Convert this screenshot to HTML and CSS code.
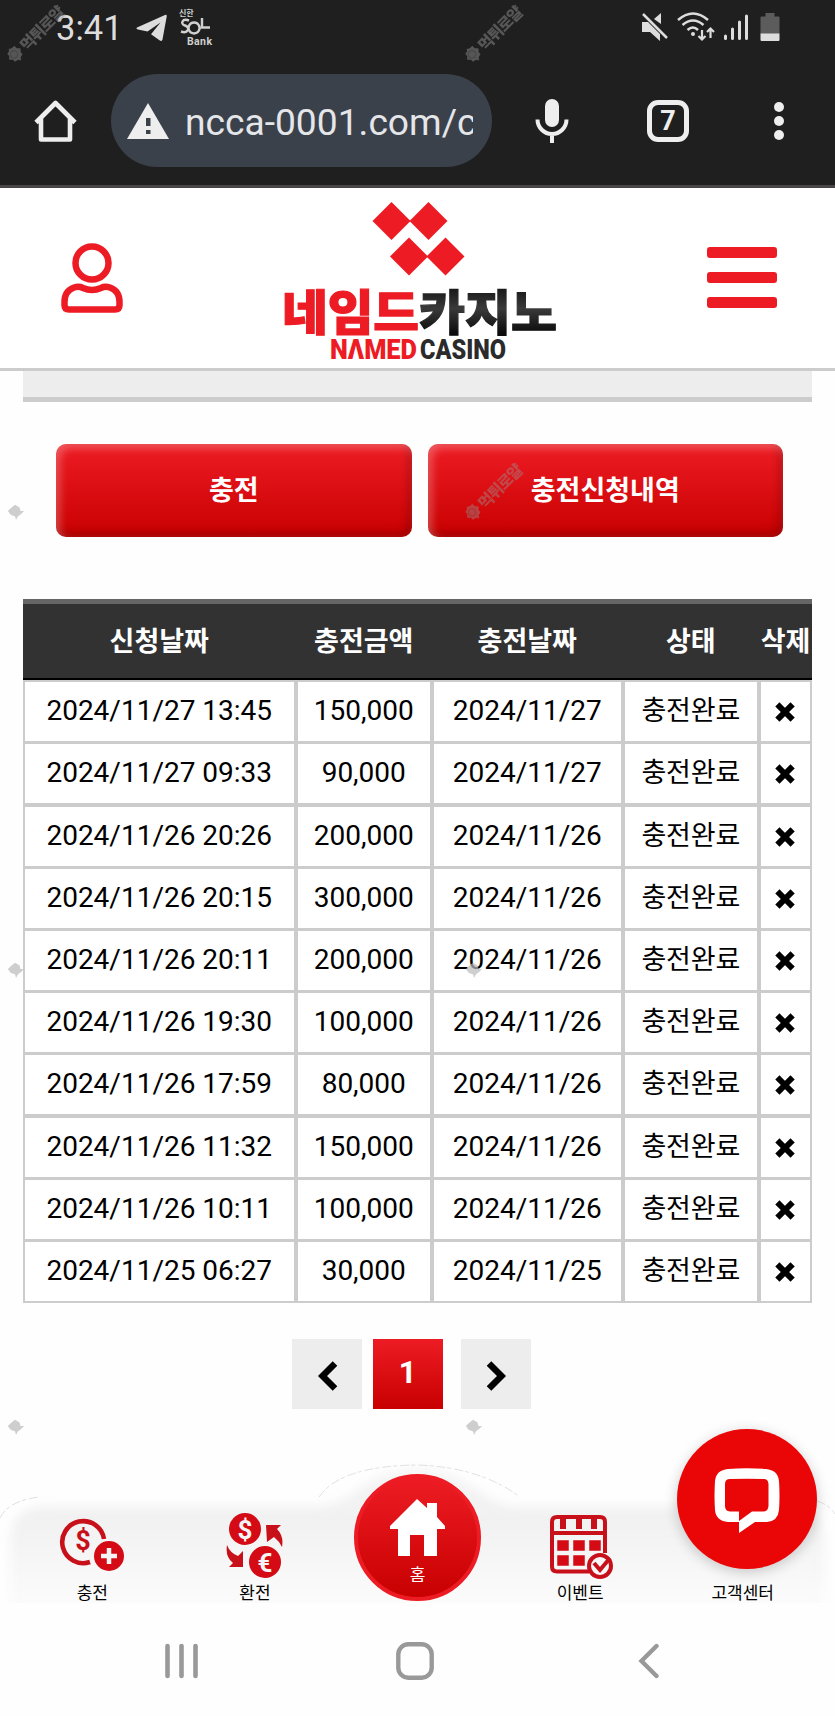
FILE: index.html
```html
<!DOCTYPE html>
<html lang="ko">

<head>
    <meta charset="UTF-8">
    <meta name="viewport" content="width=device-width, initial-scale=1.0">
    <title>네임드카지노</title>
    <link rel="stylesheet" href="styles.css">
</head>

<body>
    <svg class="defs" width="0" height="0">
        <defs>
            <symbol id="x" viewBox="0 0 20 20">
                <path d="M4.500 4.500L15.500 15.500M15.500 4.500L4.500 15.500" stroke="#000" stroke-width="6" stroke-linecap="square" />
            </symbol>
            <symbol id="badge" viewBox="0 0 20 20">
                <path d="M10 1l3 2 4 0 0 4 3 3-3 3 0 3-4 1-2 3-2-3-4-1 0-3-3-3 3-3 0-3 4-1z" fill="currentColor" />
                <circle cx="10" cy="9.500" r="4" fill="none" stroke="#000" stroke-opacity=".2" stroke-width="1.500" />
            </symbol>
            <symbol id="gem" viewBox="0 0 20 20">
                <path d="M9 2l5 3 1 4 4 0-3 3-4 3-2 4-1-4-5-2-3-4 4-4z" fill="currentColor" />
            </symbol>
            <linearGradient id="dark" x1="0" y1="0" x2="0" y2="1">
                <stop offset=".15" stop-color="#111" />
                <stop offset=".5" stop-color="#3a3a3a" />
                <stop offset=".85" stop-color="#0c0c0c" />
            </linearGradient>
            <linearGradient id="bar" x1="0" y1="0" x2="0" y2="1">
                <stop offset="0" stop-color="#f4f4f4" />
                <stop offset=".35" stop-color="#f1f1f1" />
                <stop offset="1" stop-color="#fcfcfc" />
            </linearGradient>
        </defs>
    </svg>

    <!-- status bar -->
    <div class="status">
        <span class="time">3:41</span>
        <svg class="telegram" width="32" height="28" viewBox="0 0 32 28">
            <path d="M1 13.500L29 1Q31 0 30.700 2.500L26.500 25.500Q26 28 23.500 26.300L15 20.300L24.500 8.500L11.500 17.500L2 15.500Q-.5 14.500 1 13.500z" fill="#ddd" />
        </svg>
        <svg class="sol" width="36" height="42" viewBox="0 0 36 42" fill="#d0d0d0">
            <text x="0" y="9" font-size="8" font-weight="700">신한</text>
            <path d="M10 13.500C3 11 1 17 6 18.500C12 20.500 9 27 2 24.500M15 15.500a5.500 5.500 0 1 0 .1 0zM23 11V20.500H31" fill="none" stroke="#d0d0d0" stroke-width="2.400" />
            <text x="8" y="38" font-size="10.500" font-weight="700" textLength="25">Bank</text>
        </svg>
        <div class="status-right">
            <svg width="27" height="30" viewBox="0 0 27 30">
                <path d="M20 1V12L13 7z" fill="#ddd" />
                <path d="M2 2L26 26" stroke="#1f1f1f" stroke-width="5" />
                <path d="M1 10H7L19 22V29L9 20H1z" fill="#ddd" />
                <path d="M2 2L26 26" stroke="#ddd" stroke-width="2.500" />
            </svg>
            <svg class="wifi" width="38" height="30" viewBox="0 0 38 30" fill="none" stroke="#ddd" stroke-width="2.500">
                <path d="M1 8Q16 -5 31 8M5.500 13Q16 4 26.500 13M10.500 18Q16 13 21 18" />
                <circle cx="16" cy="22" r="2" fill="#ddd" stroke="none" />
                <path d="M25 18V27M21.500 24L25 27.500L28.500 24M33.500 26V17M30 20L33.500 16.500L37 20" stroke-width="2.200" />
            </svg>
            <svg class="signal" width="26" height="30" viewBox="0 0 26 30" stroke="#ddd" stroke-width="3" stroke-linecap="round">
                <path d="M2.500 24V26.500M9.500 17V26.500M16.500 10V26.500M23.500 4V26.500" />
            </svg>
            <svg class="battery" width="20" height="30" viewBox="0 0 20 30">
                <path d="M5.500 1h9v3.500H18.500q1 0 1 1V22H.5V5.500q0-1 1-1h4z" fill="#5c5c5c" />
                <path d="M.5 21.500H19.500V28q0 1-1 1H1.500q-1 0-1-1z" fill="#ddd" />
            </svg>
        </div>
    </div>

    <!-- browser toolbar -->
    <div class="toolbar">
        <svg width="43" height="44" viewBox="0 0 43 44" fill="none" stroke="#eee" stroke-width="4.600" stroke-linejoin="round">
            <path d="M2 23.500L21.500 4L41 23.500M7 19V40.500H36V19" />
        </svg>
        <div class="url">
            <svg width="42" height="36" viewBox="0 0 42 36">
                <path d="M21 0L42 36H0z" fill="#eee" />
                <path d="M19 15h4.500v8H19zM19 27h4.500v4H19z" fill="#3b414b" />
            </svg>
            <span>ncca-0001.com/c</span>
        </div>
        <svg class="mic" width="34" height="46" viewBox="0 0 34 46">
            <rect x="10" y="1" width="14" height="28" rx="7" fill="#eee" />
            <path d="M2.500 21.500A14.500 14.500 0 0 0 31.500 21.500M17 35V45" fill="none" stroke="#eee" stroke-width="4" />
        </svg>
        <div class="tabs">7</div>
        <div class="dots"><i></i><i></i><i></i></div>
    </div>

    <!-- site header -->
    <div class="header">
        <svg width="62" height="71" viewBox="0 0 62 71" fill="none" stroke="#ed1c24" stroke-width="6.500">
            <circle cx="31" cy="20" r="16.500" />
            <path d="M3.500 62V59Q3.500 48 13 44.500Q18 43 22 45Q31 49 40 45Q44 43 49 44.500Q58.500 48 58.500 59V62Q58.500 66.500 54 66.500H8Q3.500 66.500 3.500 62z" />
        </svg>
        <svg class="logo" width="278" height="160" viewBox="0 0 278 160">
            <path d="M109.500 0l19 19-19 19-19-19zM146.500 0l19 19-19 19-19-19zM127 35.500l19 19-19 19-19-19zM163.500 35.500l19 19-19 19-19-19z" fill="#ed1c24" />
            <text class="logo-ko" x="0" y="127.500" textLength="137" lengthAdjust="spacingAndGlyphs" fill="#ed1c24" stroke="#ed1c24">네임드</text>
            <text class="logo-ko" x="137" y="127.500" textLength="138" lengthAdjust="spacingAndGlyphs" fill="url(#dark)" stroke="url(#dark)">카지노</text>
            <text class="logo-en" x="48" y="156.500" textLength="87" lengthAdjust="spacingAndGlyphs" fill="#ed1c24">NΛMED</text>
            <text class="logo-en" x="138" y="156.500" textLength="86" lengthAdjust="spacingAndGlyphs" fill="#2b2b2b">CASINO</text>
        </svg>
        <div class="menu"><i></i><i></i><i></i></div>
    </div>

    <div class="content">
        <div class="panel-end"></div>

        <div class="btns">
            <a class="btn">충전</a>
            <a class="btn">충전신청내역</a>
        </div>

        <div class="table">
            <div class="row head"><b>신청날짜</b><b>충전금액</b><b>충전날짜</b><b>상태</b><b>삭제</b></div>
            <div class="list"></div>
        </div>

        <div class="pages">
            <a class="page prev"><svg width="20" height="30" viewBox="0 0 20 30"><path d="M17 2.500L4.500 15L17 27.500" fill="none" stroke="#000" stroke-width="6.500" /></svg></a>
            <a class="page on">1</a>
            <a class="page next"><svg width="20" height="30" viewBox="0 0 20 30"><path d="M3 2.500L15.500 15L3 27.500" fill="none" stroke="#000" stroke-width="6.500" /></svg></a>
        </div>
    </div>

    <!-- bottom menu -->
    <div class="dock">
        <svg class="dock-bg" width="835" height="142" viewBox="0 0 835 142">
            <path class="dock-shape" d="M10 150V78Q12 46 46 45H322Q342 42 362 26Q417 -10 473 26Q493 42 514 45H790Q822 46 825 78V150z" fill="url(#bar)" />
            <path d="M0 57Q8 40 39 36M319 36Q340 5 417 4Q480 6 520 36M817 40Q828 43 835 53" fill="none" stroke="#ccc" stroke-width=".6" stroke-dasharray="9 2 4 3" />
        </svg>
        <div class="dock-items">
            <a class="item">
                <svg width="66" height="66" viewBox="0 0 66 66">
                    <path d="M44 27A21 21 0 1 0 30 50" transform="translate(1 -1)" fill="none" stroke="#c8101a" stroke-width="4.600" />
                    <text x="24" y="37" font-size="27" font-weight="700" text-anchor="middle" fill="#c8101a">$</text>
                    <circle cx="50" cy="43" r="15" fill="#d40b14" />
                    <path d="M50 35V51M42 43H58" stroke="#f4f4f4" stroke-width="4.500" />
                </svg>
                <span>충전</span>
            </a>
            <a class="item">
                <svg width="66" height="66" viewBox="0 0 66 66">
                    <circle cx="23" cy="16" r="16" fill="#d40b14" />
                    <circle cx="43" cy="49" r="16" fill="#d40b14" />
                    <text x="23" y="25.500" font-size="26" font-weight="700" text-anchor="middle" fill="#f4f4f4">$</text>
                    <text x="43" y="58.500" font-size="26" font-weight="700" text-anchor="middle" fill="#f4f4f4">€</text>
                    <path d="M44 12H59L55 16Q62 23 60 34Q57 28 52 24L45 29zM5 32Q8 40 16 43L21 38V54H7L11 50Q3 44 5 32z" fill="#c8101a" />
                </svg>
                <span>환전</span>
            </a>
            <a class="item home">
                <svg width="64" height="62" viewBox="0 0 64 62">
                    <path d="M32 3L42 12V7H52V21L60 30V33H52V60H39V39H25V60H13V33H5V30z" fill="#fff" />
                </svg>
                <span>홈</span>
            </a>
            <a class="item">
                <svg width="66" height="66" viewBox="0 0 66 66">
                    <path d="M42 58.500H10Q5 58.500 5 53.500V9Q5 4 10 4H53Q58 4 58 9V40M5 20H58" fill="none" stroke="#c8101a" stroke-width="4" />
                    <path d="M16 4v12M32 4v12M47 4v12" stroke="#c8101a" stroke-width="6" />
                    <path d="M11 28h10v9H11zM27 28h10v9H27zM43 28h10v9H43zM11 43h10v9H11zM27 43h10v9H27z" stroke="#d40b14" stroke-width="1.500" fill="#d40b14" />
                    <circle cx="53" cy="53" r="11" fill="#f6f6f6" stroke="#c8101a" stroke-width="4" />
                    <path d="M47 50L53 57L63 45" fill="none" stroke="#c8101a" stroke-width="4" />
                </svg>
                <span>이벤트</span>
            </a>
            <a class="item">
                <span>고객센터</span>
            </a>
        </div>
        <div class="chat">
            <svg width="66" height="66" viewBox="0 0 66 66">
                <path d="M14 1Q32.500 -.5 52 1Q64 2 65 13Q66 28 65 42Q64 53 53 54H41L25 65V54H14Q2 53 1 42Q0 28 1 13Q2 2 14 1zM16 11Q11 11 11 16V38Q11 43 16 43.500H25V53L38 43.500H50Q54 43 54.500 38V16Q54 11 50 11Q33 10.500 16 11z" fill="#fff" fill-rule="evenodd" />
            </svg>
        </div>
    </div>

    <!-- android buttons -->
    <div class="android">
        <svg width="34" height="36" viewBox="0 0 34 36" stroke="#999" stroke-width="4.600" stroke-linecap="round"><path d="M2.500 3V33M16.500 3V33M30.500 3V33" /></svg>
        <svg class="recent" width="38" height="38" viewBox="0 0 38 38"><rect x="2.300" y="2.300" width="33.400" height="33.400" rx="10" fill="none" stroke="#999" stroke-width="4.400" /></svg>
        <svg width="22" height="36" viewBox="0 0 22 36" fill="none" stroke="#999" stroke-width="4.400" stroke-linecap="round"><path d="M18.500 3L3.500 18L18.500 33" /></svg>
    </div>

    <!-- watermarks -->
    <div class="mark m1"><svg><use href="#badge" /></svg><span>먹튀로얄</span></div>
    <div class="mark m2"><svg><use href="#badge" /></svg><span>먹튀로얄</span></div>
    <div class="mark m3"><svg><use href="#badge" /></svg><span>먹튀로얄</span></div>
    <div class="pale p1"><svg><use href="#gem" /></svg></div>
    <div class="pale p2"><svg><use href="#gem" /></svg></div>
    <div class="pale p3"><svg><use href="#gem" /></svg></div>
    <div class="pale p4"><svg><use href="#gem" /></svg></div>
    <div class="pale p5"><svg><use href="#gem" /></svg></div>

    <script>
        var list = document.querySelector('.list');
        var data = [
            ['2024/11/27 13:45', '150,000'],
            ['2024/11/27 09:33', '90,000'],
            ['2024/11/26 20:26', '200,000'],
            ['2024/11/26 20:15', '300,000'],
            ['2024/11/26 20:11', '200,000'],
            ['2024/11/26 19:30', '100,000'],
            ['2024/11/26 17:59', '80,000'],
            ['2024/11/26 11:32', '150,000'],
            ['2024/11/26 10:11', '100,000'],
            ['2024/11/25 06:27', '30,000']
        ];
        var str = '';
        for (var i = 0; i < data.length; i++) {
            str += `
            <div class="row">
                <span>${data[i][0]}</span>
                <span>${data[i][1]}</span>
                <span>${data[i][0].split(' ')[0]}</span>
                <span class="ko">충전완료</span>
                <span><svg class="del"><use href="#x" /></svg></span>
            </div>
            `;
        }
        list.innerHTML = str;
    </script>
</body>

</html>
```
FILE: styles.css
```css
* {
    margin: 0;
    padding: 0;
    box-sizing: border-box;
}

body {
    position: relative;
    width: 835px;
    height: 1716px;
    overflow: hidden;
    background: #fefefe;
    font-family: Roboto, "Noto Sans CJK KR", sans-serif;
    color: #000;
}

svg {
    display: block;
    flex-shrink: 0;
}

.defs {
    position: absolute;
}

/* status bar */
.status {
    display: flex;
    height: 56px;
    padding-left: 56px;
    background: #1f1f1f;
}

.time {
    width: 80px;
    font-size: 34.5px;
    line-height: 56px;
    color: #ddd;
}

.telegram {
    margin-top: 14px;
}

.sol {
    margin: 7px 0 0 11px;
}

.status-right {
    display: flex;
    margin: 12px 55px 0 auto;
}

.wifi {
    margin-left: 9px;
}

.signal {
    margin-left: 8px;
}

.battery {
    margin-left: 11px;
}

/* toolbar */
.toolbar {
    display: flex;
    align-items: center;
    height: 132px;
    padding-left: 34px;
    background: #1f1f1f;
    border-bottom: 3px solid #484646;
}

.url {
    display: flex;
    align-items: center;
    width: 381px;
    height: 93px;
    margin-left: 34px;
    padding: 0 19px 0 16px;
    border-radius: 47px;
    background: #3b414b;
}

.url span {
    margin: 2px 0 0 16px;
    overflow: hidden;
    white-space: nowrap;
    font-size: 37.2px;
    line-height: 48px;
    color: #e4e6e9;
}

.mic {
    margin-left: 43px;
}

.tabs {
    width: 42px;
    height: 42px;
    margin-left: 78px;
    border: 5px solid #eee;
    border-radius: 11px;
    font-size: 27px;
    font-weight: 700;
    line-height: 33px;
    text-align: center;
    color: #eee;
}

.dots {
    display: grid;
    gap: 4px;
    margin-left: 85px;
}

.dots i {
    width: 10px;
    height: 10px;
    border-radius: 50%;
    background: #eee;
}

/* header */
.header {
    display: flex;
    height: 183px;
    padding: 0 58px 0 61px;
    border-bottom: 3px solid #ccc;
    background: #fff;
}

.header > svg:first-child {
    margin-top: 55px;
}

.logo {
    margin: 14px 0 0 159px;
    overflow: visible;
}

.logo-ko {
    font-family: "Noto Sans CJK KR", sans-serif;
    font-size: 48px;
    font-weight: 900;
    stroke-width: 1.2px;
}

.logo-en {
    font-family: Roboto, "Noto Sans", sans-serif;
    font-size: 27px;
    font-weight: 900;
}

.menu {
    display: grid;
    gap: 14px;
    align-content: start;
    width: 70px;
    margin: 59px 0 0 auto;
}

.menu i {
    height: 11px;
    border-radius: 3px;
    background: #ed1c24;
}

/* content */
.content {
    width: 789px;
    margin-left: 23px;
}

.panel-end {
    height: 31px;
    border-bottom: 5px solid #ccc;
    background: #ededed;
}

.btns {
    display: flex;
    gap: 16px;
    padding: 42px 29px 62px 33px;
}

.btn {
    flex: 1;
    height: 93px;
    border-radius: 10px;
    background: linear-gradient(#ed1c24, #c80000);
    box-shadow: inset 4px 4px 8px rgba(255, 255, 255, .28), inset -4px -4px 8px rgba(0, 0, 0, .2);
    color: #fff;
    font-size: 27px;
    font-weight: 700;
    line-height: 95px;
    text-align: center;
}

.row {
    display: grid;
    grid-template-columns: 272.5px 136.5px 190.5px 136.5px 53px;
    height: 62.2px;
    font-size: 28px;
    text-align: center;
    white-space: nowrap;
}

.row span {
    border: 2px solid #ccc;
    background: #fff;
    line-height: 58px;
}

.row .ko {
    font-size: 27px;
    line-height: 59px;
    letter-spacing: -0.2px;
}

.head {
    height: 81.3px;
    border-top: 5px solid #666;
    border-bottom: 2px solid #000;
    background: #323232;
    color: #fff;
    font-size: 27px;
    line-height: 77px;
}

.del {
    width: 20px;
    height: 20px;
    margin: 20px auto 0;
    transform: translateX(-1px);
}

.pages {
    display: flex;
    margin: 37px 0 0 269px;
}

.page {
    display: flex;
    align-items: center;
    justify-content: center;
    width: 69.5px;
    height: 69.5px;
    background: #ededed;
}

.page svg {
    margin-top: 5px;
}

.prev svg {
    margin-left: 2px;
}

.on {
    margin: 0 18.5px 0 11.5px;
    padding-bottom: 3px;
    background: linear-gradient(#ed1c24, #c80000);
    color: #fff;
    font-size: 31px;
    font-weight: 700;
}

/* bottom menu */
.dock {
    position: relative;
    height: 142px;
    margin-top: 52px;
}

.dock-bg {
    position: absolute;
    overflow: hidden;
}

.dock-shape {
    filter: blur(5px);
}

.dock-items {
    position: relative;
    display: grid;
    grid-template-columns: repeat(5, 1fr);
    height: 142px;
    padding: 0 11px;
}

.item {
    display: flex;
    flex-direction: column;
    align-items: center;
    justify-content: flex-end;
    font-size: 17px;
    line-height: 20px;
}

.item svg {
    margin-bottom: 4px;
}

.home {
    justify-self: center;
    align-self: end;
    width: 127px;
    height: 127px;
    margin-bottom: 2px;
    padding-bottom: 12px;
    border: 4px solid #ed1c24;
    border-radius: 50%;
    background: linear-gradient(#ed1c24, #c80000);
    color: #fff;
}

.home svg {
    margin-bottom: 7px;
}

.chat {
    position: absolute;
    left: 677px;
    top: -32px;
    display: flex;
    align-items: center;
    justify-content: center;
    width: 140px;
    height: 140px;
    padding-top: 5px;
    border-radius: 50%;
    background: #ea0606;
    box-shadow: 0 3px 14px rgba(0, 0, 0, .2);
}

.android {
    display: flex;
    align-items: center;
    justify-content: space-between;
    height: 117px;
    padding: 0 175px 0 165px;
}

.recent {
    margin-right: 7px;
}

/* watermarks */
.mark {
    position: absolute;
    display: flex;
    align-items: center;
    gap: 2px;
    height: 20px;
    transform: rotate(-45deg);
    transform-origin: 10px 10px;
    color: #999;
    opacity: .45;
    font-size: 16px;
    font-weight: 900;
    white-space: nowrap;
    letter-spacing: -1.2px;
}

.mark svg {
    width: 18px;
    height: 18px;
}

.m1 {
    left: 5px;
    top: 44px;
}

.m2 {
    left: 463px;
    top: 44px;
}

.m3 {
    left: 463px;
    top: 502px;
    opacity: .4;
}

.pale {
    position: absolute;
    color: #bbb;
    opacity: .7;
}

.pale svg {
    width: 18px;
    height: 18px;
}

.p1 {
    left: 7px;
    top: 503px;
}

.p2 {
    left: 7px;
    top: 961px;
}

.p3 {
    left: 465px;
    top: 961px;
}

.p4 {
    left: 7px;
    top: 1418px;
}

.p5 {
    left: 465px;
    top: 1418px;
}
```
